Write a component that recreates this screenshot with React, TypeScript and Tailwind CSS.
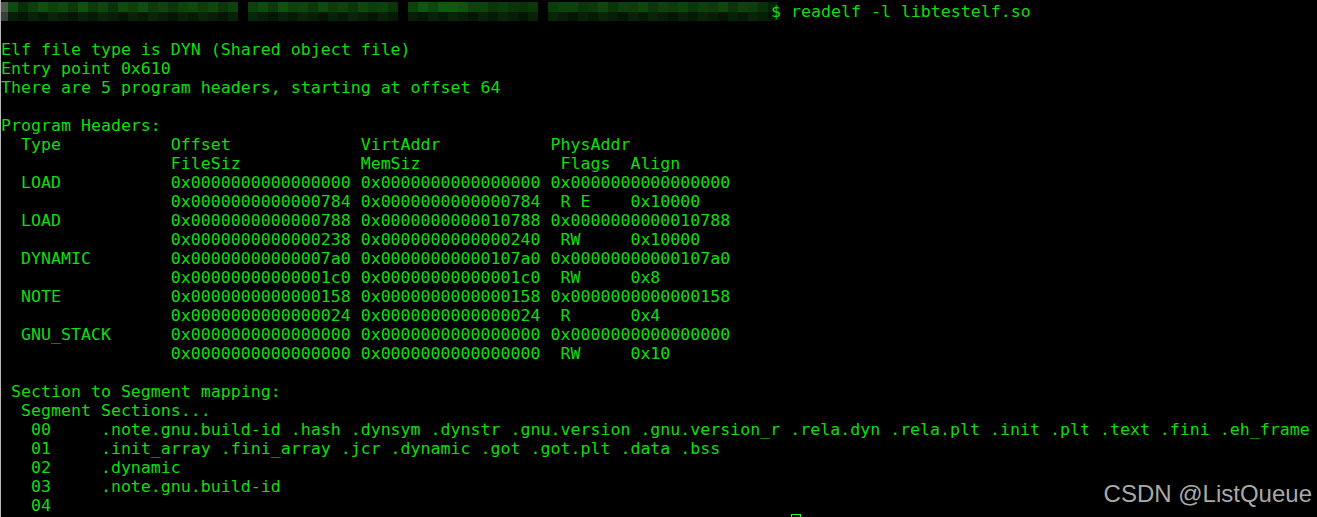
import React from 'react';

const lines = [
  'Elf file type is DYN (Shared object file)',
  'Entry point 0x610',
  'There are 5 program headers, starting at offset 64',
  '',
  'Program Headers:',
  '  Type           Offset             VirtAddr           PhysAddr',
  '                 FileSiz            MemSiz              Flags  Align',
  '  LOAD           0x0000000000000000 0x0000000000000000 0x0000000000000000',
  '                 0x0000000000000784 0x0000000000000784  R E    0x10000',
  '  LOAD           0x0000000000000788 0x0000000000010788 0x0000000000010788',
  '                 0x0000000000000238 0x0000000000000240  RW     0x10000',
  '  DYNAMIC        0x00000000000007a0 0x00000000000107a0 0x00000000000107a0',
  '                 0x00000000000001c0 0x00000000000001c0  RW     0x8',
  '  NOTE           0x0000000000000158 0x0000000000000158 0x0000000000000158',
  '                 0x0000000000000024 0x0000000000000024  R      0x4',
  '  GNU_STACK      0x0000000000000000 0x0000000000000000 0x0000000000000000',
  '                 0x0000000000000000 0x0000000000000000  RW     0x10',
  '',
  ' Section to Segment mapping:',
  '  Segment Sections...',
  '   00     .note.gnu.build-id .hash .dynsym .dynstr .gnu.version .gnu.version_r .rela.dyn .rela.plt .init .plt .text .fini .eh_frame',
  '   01     .init_array .fini_array .jcr .dynamic .got .got.plt .data .bss',
  '   02     .dynamic',
  '   03     .note.gnu.build-id',
  '   04',
];

// pixelated (mosaic) prompt, one shade per 10px cell
const topShades = [
  '#0d4a0d', '#083008', '#0b3f0b', '#0f500f', '#0c420c', '#0e4c0e', '#0a3a0a', '#0f510f', '#0b3d0b', '#0d470d',
  '#093309', '#0e4b0e', '#0c410c', '#0f4f0f', '#0b3c0b', '#0d460d', '#0a380a', '#0c440c', '#0e4a0e', '#0b3e0b',
  '#0d480d', '#0a360a', '#0c420c', '#000000', '#0c400c', '#0e4d0e', '#0b3b0b', '#0f520f', '#0c430c', '#0d470d',
  '#0a390a', '#0e4b0e', '#0b3d0b', '#0c450c', '#0a370a', '#0d480d', '#0b3f0b', '#0c420c', '#0a350a', '#000000',
  '#0c410c', '#0f560f', '#0d480d', '#0f5a0f', '#0f5a0f', '#0e540e', '#0c440c', '#0c440c', '#0a360a', '#0b3c0b',
  '#0a350a', '#093209', '#0a380a', '#000000', '#0b3c0b', '#0c420c', '#0c420c', '#0a360a', '#0b3b0b', '#0d470d',
  '#0a340a', '#0c400c', '#0b3e0b', '#0d480d', '#0a380a', '#0c430c', '#0b3d0b', '#0d460d', '#0a370a', '#0c410c',
  '#0b3c0b', '#0d470d', '#0a360a', '#0c420c', '#0b3e0b', '#0a300a', '#062206',
];
const botShades = topShades.map((c, i) =>
  c === '#000000' ? '#000000' : ['#061d06', '#041504', '#072207', '#051a05', '#082508'][i % 5]
);

export default function App() {
  return (
    <div className="relative w-[1317px] h-[517px] overflow-hidden bg-black border-l border-[#b8b8b8] font-['DejaVu_Sans_Mono',monospace] text-[16.6px] leading-[19px] text-[#10dc10]">
      <div className="pt-[2px]">
        {/* prompt line */}
        <div className="flex h-[19px] items-center whitespace-pre">
          <div className="flex flex-col">
            <div className="flex h-[10px]">
              <div className="w-[7px] bg-[#4e5e4e]" />
              {topShades.map((c, i) => (
                <div key={i} className="w-[10px]" style={{ background: c }} />
              ))}
            </div>
            <div className="flex h-[9px]">
              <div className="w-[7px] bg-[#3a3e3a]" />
              {botShades.map((c, i) => (
                <div key={i} className="w-[10px]" style={{ background: c }} />
              ))}
            </div>
          </div>
          <span className="ml-[-7px]">{'$ readelf -l libtestelf.so'}</span>
        </div>
        <div className="h-[19px]" />
        {lines.map((l, i) => (
          <div key={i} className="h-[19px] whitespace-pre">{l}</div>
        ))}
      </div>

      {/* cursor */}
      <div className="absolute left-[790px] top-[514px] w-[10px] h-[19px] border border-[#22ff22]" />

      {/* watermark */}
      <div className="absolute right-[5px] top-[479px] font-['Liberation_Sans',Arial,sans-serif] text-[24px] leading-[30px] text-[#a9a9a9]">
        CSDN @ListQueue
      </div>
    </div>
  );
}
